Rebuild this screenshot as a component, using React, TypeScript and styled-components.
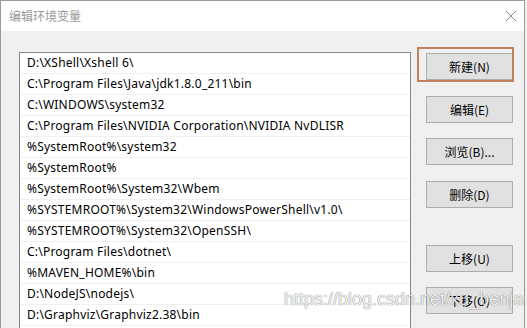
import React from "react";
import styled, { createGlobalStyle } from "styled-components";

const GlobalStyle = createGlobalStyle`
  html, body {
    margin: 0;
    padding: 0;
    background: #f0f0f0;
    overflow: hidden;
  }
  body {
    font-family: "Segoe UI", "Noto Sans", "Noto Sans CJK SC", sans-serif;
  }
`;

const Window = styled.div`
  position: relative;
  width: 523px;
  height: 327px;
  border: 1px solid #9b9b9b;
  border-bottom: none;
  background: #f0f0f0;
  overflow: hidden;
  display: flex;
  flex-direction: column;
`;

const TitleBar = styled.div`
  height: 30px;
  flex: none;
  background: #ffffff;
  display: flex;
  align-items: center;
  justify-content: space-between;
  padding: 0 7px 0 8px;
`;

const Title = styled.span`
  font-family: "Noto Sans CJK SC", sans-serif;
  font-size: 12px;
  color: #9a9a9a;
  padding-bottom: 1px;
`;

const CloseIcon = () => (
  <svg width="12" height="12" viewBox="0 0 12 12">
    <path d="M1 1 L11 11 M11 1 L1 11" stroke="#8a8a8a" strokeWidth="1" />
  </svg>
);

const Body = styled.div`
  flex: 1;
  display: flex;
  align-items: flex-start;
  padding: 21px 0 0 18px;
`;

const List = styled.div`
  width: 390px;
  height: 320px;
  flex: none;
  border: 1px solid #828790;
  background: #ffffff;
`;

const Row = styled.div`
  height: 20px;
  line-height: 20px;
  padding-left: 7px;
  border-bottom: 1px solid #f0f0f0;
  font-family: "Noto Sans", "Noto Sans CJK SC", sans-serif;
  font-size: 12px;
  letter-spacing: 0.22px;
  color: #000000;
  white-space: nowrap;
`;

const Buttons = styled.div`
  display: flex;
  flex-direction: column;
  margin-left: 15px;
  padding-top: 1px;
`;

const Button = styled.button<{ $gap?: number; $focus?: boolean }>`
  position: relative;
  width: 87px;
  height: 27px;
  margin-top: ${(p) => p.$gap ?? 0}px;
  padding: 0;
  background: #e1e1e1;
  border: 1px solid #adadad;
  font-family: "Noto Sans CJK SC", sans-serif;
  font-size: 12px;
  color: #000000;
  display: flex;
  align-items: center;
  justify-content: center;

  ${(p) =>
    p.$focus &&
    `
    &::after {
      content: "";
      position: absolute;
      left: -10px;
      top: -7px;
      width: 93px;
      height: 31px;
      border: 2px solid #c0825f;
    }
  `}
`;

const Watermark = styled.div`
  position: absolute;
  z-index: 2;
  left: 283px;
  top: 288px;
  font-family: "Liberation Sans", Arial, sans-serif;
  font-size: 18px;
  color: rgba(255, 255, 255, 0.9);
  text-shadow: 0 0 1px rgba(0, 0, 0, 0.45), 0 0 1px rgba(0, 0, 0, 0.3);
  pointer-events: none;
  white-space: nowrap;
`;

const paths = [
  "D:\\XShell\\Xshell 6\\",
  "C:\\Program Files\\Java\\jdk1.8.0_211\\bin",
  "C:\\WINDOWS\\system32",
  "C:\\Program Files\\NVIDIA Corporation\\NVIDIA NvDLISR",
  "%SystemRoot%\\system32",
  "%SystemRoot%",
  "%SystemRoot%\\System32\\Wbem",
  "%SYSTEMROOT%\\System32\\WindowsPowerShell\\v1.0\\",
  "%SYSTEMROOT%\\System32\\OpenSSH\\",
  "C:\\Program Files\\dotnet\\",
  "%MAVEN_HOME%\\bin",
  "D:\\NodeJS\\nodejs\\",
  "D:\\Graphviz\\Graphviz2.38\\bin",
  "",
];

const buttons = [
  { label: "新建(N)", gap: 0, focus: true },
  { label: "编辑(E)", gap: 16 },
  { label: "浏览(B)...", gap: 15 },
  { label: "删除(D)", gap: 16 },
  { label: "上移(U)", gap: 37 },
  { label: "下移(O)", gap: 15 },
];

export default function App() {
  return (
    <>
      <GlobalStyle />
      <Window>
        <TitleBar>
          <Title>编辑环境变量</Title>
          <CloseIcon />
        </TitleBar>
        <Body>
          <List>
            {paths.map((p, i) => (
              <Row key={i}>{p}</Row>
            ))}
          </List>
          <Buttons>
            {buttons.map((b) => (
              <Button key={b.label} $gap={b.gap} $focus={b.focus}>
                {b.label}
              </Button>
            ))}
          </Buttons>
        </Body>
        <Watermark>https://blog.csdn.net/xu_benjamin</Watermark>
      </Window>
    </>
  );
}
